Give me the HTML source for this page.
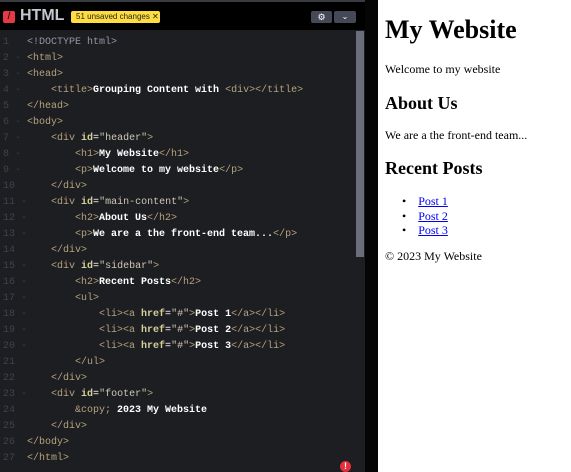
<!DOCTYPE html>
<html><head><style>
body{margin:0;width:571px;height:472px;overflow:hidden;background:#fff;position:relative;font-family:"Liberation Sans",sans-serif}
#ed{position:absolute;left:0;top:0;width:365px;height:472px;background:#1d1e22}
#top{position:absolute;left:0;top:0;width:365px;height:30px;background:#000;border-top:2px solid #3a3b40;box-sizing:border-box}
#div{position:absolute;left:365px;top:0;width:13px;height:472px;background:#050505}
#sb{position:absolute;left:356px;top:31px;width:8px;height:226px;background:#6b6e7a}
.code{position:absolute;left:0;top:35px;font-family:"Liberation Mono",monospace;font-size:10px;line-height:16px;color:#fff;white-space:pre}
.ln{display:inline-block;width:27px;color:#3f424b;padding-left:3px;box-sizing:border-box;position:relative}
.t{color:#b5a27d}.a{color:#d6cf9a;font-weight:bold}.s{color:#cdc8b5}.w{font-weight:bold;color:#fff}.d{color:#9a93a8}
#pv{position:absolute;left:378px;top:0;width:193px;font-family:"Liberation Serif",serif;color:#000}
#pv div{position:absolute;left:7px;white-space:nowrap}
a{color:#00e}
</style></head><body>
<div id="ed"></div>
<div id="top">
<div style="position:absolute;left:3px;top:9px;width:12px;height:12px;background:#e63946;border-radius:2px;color:#000;font-size:10px;line-height:12px;text-align:center">/</div>
<div style="position:absolute;left:20px;top:5px;color:#c5c7d0;font-size:16px;font-weight:bold">HTML</div>
<div style="position:absolute;left:71px;top:9px;width:89px;height:12px;background:#ffdd40;border-radius:2px;font-size:8px;line-height:12px;color:#222;padding-left:5px;box-sizing:border-box">51 unsaved changes ✕</div>
<div style="position:absolute;left:311px;top:9px;width:21px;height:12px;background:#444857;border-radius:2px;color:#fff;font-size:9px;line-height:12px;text-align:center">⚙</div>
<div style="position:absolute;left:334px;top:9px;width:22px;height:12px;background:#444857;border-radius:2px;color:#fff;font-size:8px;line-height:12px;text-align:center">⌄</div>
</div>
<div id="sb"></div>
<div id="div"></div>
<div class="code"><span class="ln">1</span><span class="d">&lt;!DOCTYPE html&gt;</span>
<span class="ln">2 -</span><span class="t">&lt;html&gt;</span>
<span class="ln">3 -</span><span class="t">&lt;head&gt;</span>
<span class="ln">4 -</span>    <span class="t">&lt;title&gt;</span><span class="w">Grouping Content with </span><span class="t">&lt;div&gt;&lt;/title&gt;</span>
<span class="ln">5</span><span class="t">&lt;/head&gt;</span>
<span class="ln">6 -</span><span class="t">&lt;body&gt;</span>
<span class="ln">7 -</span>    <span class="t">&lt;div </span><span class="a">id</span>=<span class="s">"header"</span><span class="t">&gt;</span>
<span class="ln">8 -</span>        <span class="t">&lt;h1&gt;</span><span class="w">My Website</span><span class="t">&lt;/h1&gt;</span>
<span class="ln">9 -</span>        <span class="t">&lt;p&gt;</span><span class="w">Welcome to my website</span><span class="t">&lt;/p&gt;</span>
<span class="ln">10</span>    <span class="t">&lt;/div&gt;</span>
<span class="ln">11 -</span>    <span class="t">&lt;div </span><span class="a">id</span>=<span class="s">"main-content"</span><span class="t">&gt;</span>
<span class="ln">12 -</span>        <span class="t">&lt;h2&gt;</span><span class="w">About Us</span><span class="t">&lt;/h2&gt;</span>
<span class="ln">13 -</span>        <span class="t">&lt;p&gt;</span><span class="w">We are a the front-end team...</span><span class="t">&lt;/p&gt;</span>
<span class="ln">14</span>    <span class="t">&lt;/div&gt;</span>
<span class="ln">15 -</span>    <span class="t">&lt;div </span><span class="a">id</span>=<span class="s">"sidebar"</span><span class="t">&gt;</span>
<span class="ln">16 -</span>        <span class="t">&lt;h2&gt;</span><span class="w">Recent Posts</span><span class="t">&lt;/h2&gt;</span>
<span class="ln">17 -</span>        <span class="t">&lt;ul&gt;</span>
<span class="ln">18 -</span>            <span class="t">&lt;li&gt;&lt;a </span><span class="a">href</span>=<span class="s">"#"</span><span class="t">&gt;</span><span class="w">Post 1</span><span class="t">&lt;/a&gt;&lt;/li&gt;</span>
<span class="ln">19 -</span>            <span class="t">&lt;li&gt;&lt;a </span><span class="a">href</span>=<span class="s">"#"</span><span class="t">&gt;</span><span class="w">Post 2</span><span class="t">&lt;/a&gt;&lt;/li&gt;</span>
<span class="ln">20 -</span>            <span class="t">&lt;li&gt;&lt;a </span><span class="a">href</span>=<span class="s">"#"</span><span class="t">&gt;</span><span class="w">Post 3</span><span class="t">&lt;/a&gt;&lt;/li&gt;</span>
<span class="ln">21</span>        <span class="t">&lt;/ul&gt;</span>
<span class="ln">22</span>    <span class="t">&lt;/div&gt;</span>
<span class="ln">23 -</span>    <span class="t">&lt;div </span><span class="a">id</span>=<span class="s">"footer"</span><span class="t">&gt;</span>
<span class="ln">24</span>        <span class="t">&amp;copy;</span><span class="w"> 2023 My Website</span>
<span class="ln">25</span>    <span class="t">&lt;/div&gt;</span>
<span class="ln">26</span><span class="t">&lt;/body&gt;</span>
<span class="ln">27</span><span class="t">&lt;/html&gt;</span></div>
<div style="position:absolute;left:340px;top:461px;width:11px;height:11px;border-radius:50%;background:#e62e3c;color:#fff;font-size:9px;font-weight:bold;line-height:11px;text-align:center">!</div>
<div id="pv">
<div style="top:15px;font-size:26px;font-weight:bold">My Website</div>
<div style="top:62px;font-size:12px">Welcome to my website</div>
<div style="top:93px;font-size:18px;font-weight:bold">About Us</div>
<div style="top:128px;font-size:12px">We are a the front-end team...</div>
<div style="top:158px;font-size:18px;font-weight:bold">Recent Posts</div>
<div style="top:194px;left:24px;font-size:12px;line-height:14.5px">•&nbsp;&nbsp;&nbsp;&nbsp;<a href="#">Post 1</a><br>•&nbsp;&nbsp;&nbsp;&nbsp;<a href="#">Post 2</a><br>•&nbsp;&nbsp;&nbsp;&nbsp;<a href="#">Post 3</a></div>
<div style="top:249px;font-size:12px">© 2023 My Website</div>
</div>
</body></html>
